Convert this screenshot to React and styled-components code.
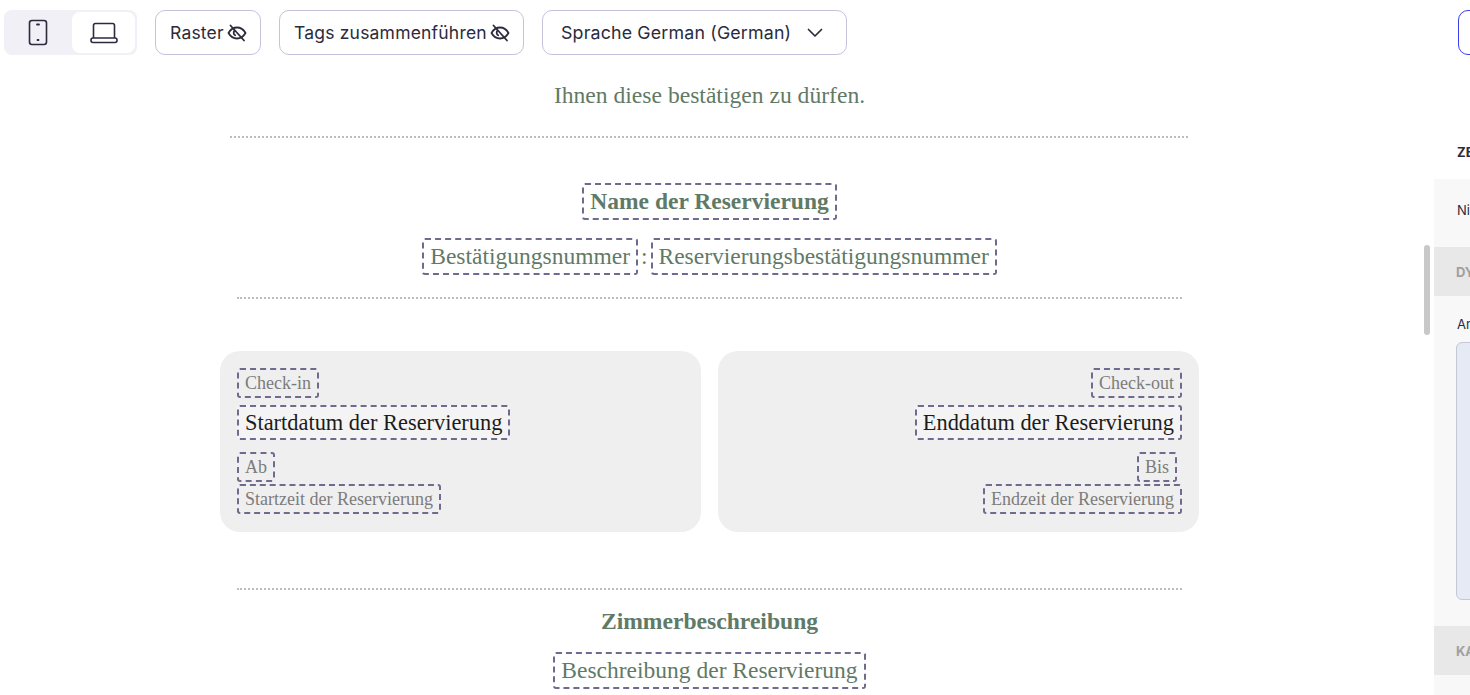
import React from 'react';
import styled, {createGlobalStyle} from 'styled-components';

const GlobalStyle = createGlobalStyle`
  html, body {
    margin: 0;
    height: 100%;
    overflow: hidden;
    background: #ffffff;
  }
  * {
    box-sizing: border-box;
  }
`;

const Page = styled.div`
  position: relative;
  display: flex;
  width: 1470px;
  height: 695px;
  overflow: hidden;
`;
const Editor = styled.div`
  width: 1434px;
  flex-shrink: 0;
  display: flex;
  flex-direction: column;
`;
const Toolbar = styled.div`
  display: flex;
  align-items: center;
  gap: 18px;
  padding: 10px 0 0 4px;
  font-family: Inter, sans-serif;
  color: #2c2b3c;
`;
const DeviceSwitch = styled.div`
  display: flex;
  width: 133px;
  height: 45px;
  padding: 2px 2px 2px 0;
  border-radius: 8px;
  background: #f0f0f6;
`;
const DeviceButton = styled.div`
  flex: ${props => props.$active ? '0 0 63px' : '1'};
  display: flex;
  align-items: center;
  justify-content: center;
  border-radius: 8px;
  background: ${props => props.$active ? '#ffffff' : 'transparent'};
`;
const ToolButton = styled.div`
  display: flex;
  align-items: center;
  gap: 3px;
  height: 45px;
  width: ${props => props.$width}px;
  padding-left: 14px;
  border: 1px solid #c5c2dc;
  border-radius: 10px;
  font-size: 17.5px;
  letter-spacing: 0.2px;
  white-space: nowrap;
`;
const LanguageButton = styled(ToolButton)`
  gap: 14px;
  padding-left: 18px;
  font-size: 17.8px;
  letter-spacing: 0.17px;
`;

const Preview = styled.div`
  width: 979px;
  margin-left: 220px;
  display: flex;
  flex-direction: column;
  align-items: center;
  font-family: "Liberation Serif", "Times New Roman", serif;
  color: #5f7a66;
`;
const Intro = styled.div`
  margin-top: 22px;
  font-size: 23.6px;
  line-height: 36px;
`;
const Divider = styled.div`
  width: ${props => props.$width}px;
  height: 0;
  margin-top: ${props => props.$top}px;
  margin-right: ${props => props.$nudge || 0}px;
  border-top: 2px dotted #bdbdbd;
`;
const Heading = styled.div`
  font-size: 23.6px;
  font-weight: bold;
  line-height: 27px;
`;
const Token = styled.span`
  display: inline-block;
  padding: 0 6px;
  border: 2px dashed #6f6a8e;
  border-radius: 3px;
  font-size: ${props => props.$size || 23.5}px;
  line-height: ${props => props.$line || 33}px;
  white-space: nowrap;
`;
const TitleRow = styled.div`
  margin-top: 45px;
`;
const PairRow = styled.div`
  display: flex;
  align-items: center;
  gap: 3px;
  margin-top: ${props => props.$top}px;
  font-size: 23.5px;
`;
const Cards = styled.div`
  display: flex;
  gap: 17px;
  width: 100%;
  margin-top: 52px;
`;
const Card = styled.div`
  flex: 1;
  height: 181px;
  padding: 17px;
  display: flex;
  flex-direction: column;
  align-items: ${props => props.$right ? 'flex-end' : 'flex-start'};
  border-radius: 20px;
  background: #efefef;
  color: #7c7c7c;
`;
const DateToken = styled(Token)`
  margin-top: 7px;
  color: #1c1c1c;
  background: #f4f4f4;
  font-size: 22.4px;
  line-height: 31px;
`;
const TimeLabel = styled(Token)`
  margin-top: 12px;
  margin-right: ${props => props.$shift || 0}px;
`;
const TimeToken = styled(Token)`
  margin-top: 2px;
`;
const RoomHeading = styled(Heading)`
  margin-top: 18px;
`;

const SidePanel = styled.div`
  flex: 1;
  min-width: 0;
  overflow: hidden;
  position: relative;
  font-family: Inter, sans-serif;
  font-size: 13px;
  color: #2c2b3c;
`;
const SaveButton = styled.div`
  position: absolute;
  top: 10px;
  left: 24px;
  width: 120px;
  height: 45px;
  border: 1px solid #3d3df0;
  border-radius: 10px;
`;
const PanelTitle = styled.div`
  margin: 144px 0 0 23px;
  height: 17px;
  font-size: 13px;
  font-weight: 700;
  line-height: 17px;
  white-space: nowrap;
`;
const PanelBody = styled.div`
  margin-top: 18px;
  height: 516px;
  background: #f8f8f8;
`;
const PanelText = styled.div`
  padding: 22px 0 0 23px;
  height: 68px;
  line-height: 18px;
  white-space: nowrap;
`;
const PanelBand = styled.div`
  display: flex;
  align-items: center;
  height: 49px;
  padding-left: 22px;
  background: #e8e8e8;
  color: #a0a0a0;
  font-size: 13px;
  font-weight: 700;
  white-space: nowrap;
`;
const FieldLabel = styled.div`
  padding: 19px 0 0 23px;
  height: 46px;
  line-height: 18px;
  white-space: nowrap;
`;
const TextArea = styled.div`
  margin-left: 22px;
  width: 200px;
  height: 258px;
  margin-bottom: 26px;
  border: 1px solid #c4c8d6;
  border-radius: 6px;
  background: #e6eaf5;
`;
const ScrollThumb = styled.div`
  position: absolute;
  left: 1424px;
  top: 245px;
  width: 6px;
  height: 90px;
  border-radius: 3px;
  background: #c8c8c8;
`;

const TabletIcon = () => (
  <svg width="22" height="28" viewBox="0 0 22 28" fill="none" stroke="#2c2b3c" strokeWidth="1.6">
    <rect x="2.500" y="1.500" width="17" height="24" rx="2.500"/>
    <path d="M10 5.500h2M10.500 21h1" strokeLinecap="round" strokeWidth="1.800"/>
  </svg>
);
const LaptopIcon = () => (
  <svg width="30" height="26" viewBox="0 0 30 26" fill="none" stroke="#2c2b3c" strokeWidth="1.6">
    <path d="M4.500 18V5.500A2 2 0 0 1 6.500 3.500h17a2 2 0 0 1 2 2V18"/>
    <rect x="2" y="18" width="26" height="4.500" rx="2"/>
  </svg>
);
const EyeOffIcon = () => (
  <svg width="20" height="18" viewBox="0 0 20 18" fill="none" stroke="#2c2b3c" strokeWidth="1.800" strokeLinecap="round" strokeLinejoin="round">
    <path d="M1.500 9C3.500 5.500 6.500 3.500 10 3.500c3.500 0 6.500 2 8.500 5.500-2 3.500-5 5.500-8.500 5.500-3.500 0-6.500-2-8.500-5.500z"/>
    <path d="M7.500 6.500c-1.300 1.500-1 3.800.7 4.800"/>
    <path d="M3.500 1.500l13.500 15"/>
  </svg>
);
const ChevronIcon = () => (
  <svg width="20" height="20" viewBox="0 0 20 20" fill="none" stroke="#2c2b3c" strokeWidth="1.700" strokeLinecap="round" strokeLinejoin="round">
    <path d="M3.500 6.500L10 13l6.500-6.500"/>
  </svg>
);

export default function App() {
  return (
    <Page>
      <GlobalStyle/>
      <Editor>
        <Toolbar>
          <DeviceSwitch>
            <DeviceButton><TabletIcon/></DeviceButton>
            <DeviceButton $active><LaptopIcon/></DeviceButton>
          </DeviceSwitch>
          <ToolButton $width={106}>Raster <EyeOffIcon/></ToolButton>
          <ToolButton $width={245}>Tags zusammenführen <EyeOffIcon/></ToolButton>
          <LanguageButton $width={305}>Sprache German (German) <ChevronIcon/></LanguageButton>
        </Toolbar>
        <Preview>
          <Intro>Ihnen diese bestätigen zu dürfen.</Intro>
          <Divider $width={958} $top={23} $nudge={2}/>
          <TitleRow>
            <Token as={Heading}>Name der Reservierung</Token>
          </TitleRow>
          <PairRow $top={18}>
            <Token>Bestätigungsnummer</Token>
            :
            <Token>Reservierungsbestätigungsnummer</Token>
          </PairRow>
          <Divider $width={945} $top={22}/>
          <Cards>
            <Card>
              <Token $size={18} $line={26}>Check-in</Token>
              <DateToken>Startdatum der Reservierung</DateToken>
              <TimeLabel $size={18} $line={26}>Ab</TimeLabel>
              <TimeToken $size={18} $line={26}>Startzeit der Reservierung</TimeToken>
            </Card>
            <Card $right>
              <Token $size={18} $line={26}>Check-out</Token>
              <DateToken>Enddatum der Reservierung</DateToken>
              <TimeLabel $size={18} $line={26} $shift={5}>Bis</TimeLabel>
              <TimeToken $size={18} $line={26}>Endzeit der Reservierung</TimeToken>
            </Card>
          </Cards>
          <Divider $width={945} $top={56}/>
          <RoomHeading>Zimmerbeschreibung</RoomHeading>
          <PairRow $top={17}>
            <Token>Beschreibung der Reservierung</Token>
          </PairRow>
        </Preview>
      </Editor>
      <ScrollThumb/>
      <SidePanel>
        <SaveButton/>
        <PanelTitle>ZEITPLAN</PanelTitle>
        <PanelBody>
          <PanelText>Nicht</PanelText>
          <PanelBand>DYNAMISCH</PanelBand>
          <FieldLabel>Anzeige</FieldLabel>
          <TextArea/>
          <PanelBand>KATEGORIE</PanelBand>
        </PanelBody>
      </SidePanel>
    </Page>
  );
}
